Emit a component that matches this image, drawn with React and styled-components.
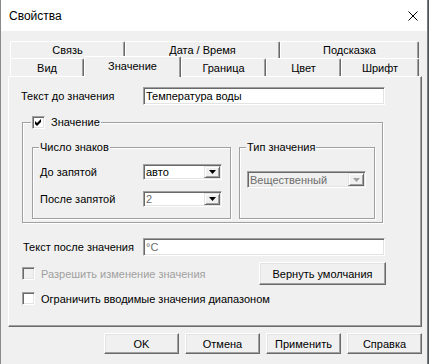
import styled, { createGlobalStyle } from "styled-components"

const GlobalStyle = createGlobalStyle`
  html, body {
    margin: 0;
    background: #4b5260;
  }
  body {
    font-family: "Liberation Sans", Arial, sans-serif;
    font-size: 11px;
    color: #000;
  }
  * {
    box-sizing: border-box;
  }
`

const Window = styled.div`
  width: 428px;
  height: 380px;
  background: #f0f0f0;
  border-left: 1px solid #8a8a8a;
  border-right: 1px solid #7a7a7a;
  overflow: hidden;
`

const TitleBar = styled.div`
  height: 31px;
  background: #fff;
  display: flex;
  align-items: center;
  justify-content: space-between;
  padding: 0 9px 0 8px;
`

const Title = styled.span`
  font-size: 12px;
  padding-top: 1px;
`

const CloseIcon = () => (
  <svg width="10" height="10" viewBox="0 0 10 10">
    <path d="M0.5 0.5 L9.5 9.5 M9.5 0.5 L0.5 9.5" stroke="#000" strokeWidth="1" />
  </svg>
)

const Body = styled.div`
  padding: 10px 0 0 7px;
`

const TabRow = styled.div`
  display: flex;
  align-items: flex-end;
  margin-left: 2px;
  height: ${(p) => p.$h}px;
`

const Tab = styled.div`
  width: ${(p) => p.$w}px;
  height: ${(p) => (p.$active ? 21 : p.$h)}px;
  margin-bottom: ${(p) => (p.$active ? -1 : 0)}px;
  position: relative;
  z-index: ${(p) => (p.$active ? 2 : 1)};
  display: flex;
  align-items: center;
  justify-content: center;
  padding-bottom: ${(p) => (p.$active ? 2 : 0)}px;
  background: #f0f0f0;
  border-top: 1px solid #fff;
  border-left: 1px solid #fff;
  border-right: 1px solid #696969;
  box-shadow: inset -1px 0 #a0a0a0;
  border-radius: 2px 2px 0 0;
`

const Panel = styled.div`
  width: 414px;
  height: 251px;
  border-top: 1px solid #fff;
  border-left: 1px solid #fff;
  border-right: 1px solid #696969;
  border-bottom: 1px solid #696969;
  box-shadow: inset -1px -1px #a0a0a0;
`

const FieldRow = styled.div`
  display: flex;
  align-items: center;
  margin-top: ${(p) => p.$top}px;
  padding-left: ${(p) => p.$left}px;
`

const Label = styled.span`
  width: ${(p) => p.$w}px;
  flex-shrink: 0;
  color: ${(p) => (p.$disabled ? "#a0a0a0" : "#000")};
  white-space: nowrap;
`

const Sunken = styled.div`
  display: flex;
  align-items: center;
  width: ${(p) => p.$w}px;
  height: ${(p) => p.$h}px;
  background: ${(p) => (p.$disabled ? "#f0f0f0" : "#fff")};
  border: 1px solid;
  border-color: #a0a0a0 #fff #fff #a0a0a0;
  box-shadow: inset 1px 1px #696969, inset -1px -1px #e3e3e3;
  padding: 1px 1px 1px 2px;
`

const FieldText = styled.span`
  flex: 1;
  color: ${(p) => (p.$grey ? "#6d6d6d" : "#000")};
  white-space: nowrap;
`

const ArrowButton = styled.div`
  width: 16px;
  align-self: stretch;
  display: flex;
  align-items: center;
  justify-content: center;
  background: #f0f0f0;
  border: 1px solid;
  border-color: #e3e3e3 #696969 #696969 #e3e3e3;
  box-shadow: inset 1px 1px #fff, inset -1px -1px #a0a0a0;
`

const Arrow = ({ color }) => (
  <svg width="7" height="4" viewBox="0 0 7 4">
    <path d="M0 0 H7 L3.5 4 Z" fill={color} />
  </svg>
)

const Combo = ({ value, w, h = 16, grey, disabled }) => (
  <Sunken $w={w} $h={h} $disabled={disabled}>
    <FieldText $grey={grey}>{value}</FieldText>
    <ArrowButton>
      <Arrow color={disabled ? "#a0a0a0" : "#000"} />
    </ArrowButton>
  </Sunken>
)

const GroupBox = styled.div`
  position: relative;
  width: ${(p) => p.$w}px;
  height: ${(p) => p.$h}px;
  margin-top: ${(p) => p.$top || 0}px;
  margin-left: ${(p) => p.$left || 0}px;
  border: 1px solid #a0a0a0;
  box-shadow: inset 1px 1px #fff, 1px 1px #fff;
`

const Caption = styled.div`
  position: absolute;
  top: -7px;
  left: ${(p) => p.$left}px;
  display: flex;
  align-items: center;
  gap: 6px;
  padding: 0 1px;
  background: #f0f0f0;
  line-height: 13px;
`

const GroupsRow = styled.div`
  display: flex;
  gap: 8px;
  padding: 24px 0 0 9px;
`

const GroupContent = styled.div`
  padding: ${(p) => p.$pad};
  display: flex;
  flex-direction: column;
  gap: ${(p) => p.$gap || 0}px;
`

const ComboRow = styled.div`
  display: flex;
  align-items: center;
`

const CheckBox = styled.div`
  width: 13px;
  height: 13px;
  flex-shrink: 0;
  display: flex;
  align-items: center;
  justify-content: center;
  background: ${(p) => (p.$disabled ? "#f0f0f0" : "#fff")};
  border: 1px solid;
  border-color: #a0a0a0 #fff #fff #a0a0a0;
  box-shadow: inset 1px 1px #696969, inset -1px -1px #e3e3e3;
`

const Check = () => (
  <svg width="7" height="7" viewBox="0 0 7 7">
    <polygon points="0,2 2,4 6,0 6,3 2,7 0,5" fill="#000" />
  </svg>
)

const CheckLine = styled.div`
  display: flex;
  align-items: center;
  gap: 6px;
  color: ${(p) => (p.$disabled ? "#a0a0a0" : "#000")};
  white-space: nowrap;
`

const ActionRow = styled.div`
  display: flex;
  align-items: center;
  justify-content: space-between;
  margin-top: ${(p) => p.$top}px;
  padding: 0 35px 0 13px;
`

const Button = styled.div`
  width: ${(p) => p.$w}px;
  height: ${(p) => p.$h}px;
  display: flex;
  align-items: center;
  justify-content: center;
  background: #f0f0f0;
  border: 1px solid;
  border-color: #fff #696969 #696969 #fff;
  box-shadow: inset -1px -1px #a0a0a0, inset 1px 1px #e3e3e3;
  white-space: nowrap;
`

const ButtonBar = styled.div`
  display: flex;
  justify-content: flex-end;
  gap: 6px;
  margin-top: 6px;
  padding-right: 5px;
`

export default function App() {
  return (
    <>
      <GlobalStyle />
      <Window>
        <TitleBar>
          <Title>Свойства</Title>
          <CloseIcon />
        </TitleBar>
        <Body>
          <TabRow $h={17}>
            <Tab $w={115} $h={17}>Связь</Tab>
            <Tab $w={155} $h={17}>Дата / Время</Tab>
            <Tab $w={139} $h={17}>Подсказка</Tab>
          </TabRow>
          <TabRow $h={18}>
            <Tab $w={74} $h={18}>Вид</Tab>
            <Tab $w={97} $active>Значение</Tab>
            <Tab $w={85} $h={18}>Граница</Tab>
            <Tab $w={75} $h={18}>Цвет</Tab>
            <Tab $w={78} $h={18}>Шрифт</Tab>
          </TabRow>
          <Panel>
            <FieldRow $top={10} $left={12}>
              <Label $w={122}>Текст до значения</Label>
              <Sunken $w={242} $h={18}>
                <FieldText>Температура воды</FieldText>
              </Sunken>
            </FieldRow>

            <GroupBox $w={361} $h={101} $top={17} $left={13}>
              <Caption $left={8}>
                <CheckBox>
                  <Check />
                </CheckBox>
                Значение
              </Caption>
              <GroupsRow>
                <GroupBox $w={199} $h={72}>
                  <Caption $left={6}>Число знаков</Caption>
                  <GroupContent $pad="16px 0 0 7px" $gap={11}>
                    <ComboRow>
                      <Label $w={103}>До запятой</Label>
                      <Combo value="авто" w={79} />
                    </ComboRow>
                    <ComboRow>
                      <Label $w={103}>После запятой</Label>
                      <Combo value="2" w={79} grey />
                    </ComboRow>
                  </GroupContent>
                </GroupBox>
                <GroupBox $w={136} $h={72}>
                  <Caption $left={6}>Тип значения</Caption>
                  <GroupContent $pad="23px 0 0 7px">
                    <Combo value="Вещественный" w={119} h={17} grey disabled />
                  </GroupContent>
                </GroupBox>
              </GroupsRow>
            </GroupBox>

            <FieldRow $top={15} $left={14}>
              <Label $w={120}>Текст после значения</Label>
              <Sunken $w={242} $h={18}>
                <FieldText $grey>°C</FieldText>
              </Sunken>
            </FieldRow>

            <ActionRow $top={6}>
              <CheckLine $disabled>
                <CheckBox $disabled />
                Разрешить изменение значения
              </CheckLine>
              <Button $w={127} $h={23}>Вернуть умолчания</Button>
            </ActionRow>

            <ActionRow $top={7}>
              <CheckLine>
                <CheckBox />
                Ограничить вводимые значения диапазоном
              </CheckLine>
            </ActionRow>
          </Panel>
          <ButtonBar>
            <Button $w={75} $h={21}>OK</Button>
            <Button $w={75} $h={21}>Отмена</Button>
            <Button $w={75} $h={21}>Применить</Button>
            <Button $w={75} $h={21}>Справка</Button>
          </ButtonBar>
        </Body>
      </Window>
    </>
  )
}
